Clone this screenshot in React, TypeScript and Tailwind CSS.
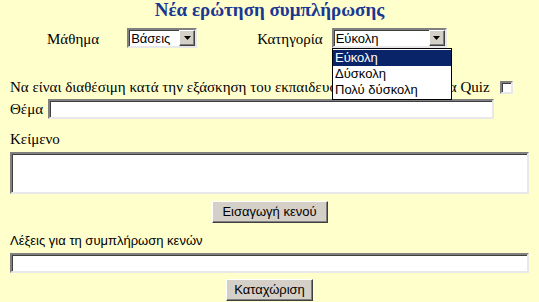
import React from "react";

const serif = "[font-family:'Liberation_Serif','Times_New_Roman',serif]";
const sans = "[font-family:'Liberation_Sans',Arial,sans-serif]";

// classic win9x sunken field
const sunken =
  "border-2 border-t-[#808080] border-l-[#808080] border-b-[#e8e8e8] border-r-[#e8e8e8] shadow-[inset_1px_1px_#404040] bg-white";
const raised =
  "border border-t-white border-l-white border-b-[#404040] border-r-[#404040] shadow-[inset_-1px_-1px_#808080] bg-[#d4d0c8]";

function Arrow() {
  return (
    <span className={`flex h-[16px] w-[16px] shrink-0 items-center justify-center ${raised}`}>
      <svg width="7" height="4" viewBox="0 0 7 4">
        <path d="M0 0h7L3.5 4z" fill="#000" />
      </svg>
    </span>
  );
}

function Select({ value, width }: { value: string; width: number }) {
  return (
    <div className={`flex h-[20px] items-center ${sunken}`} style={{ width }}>
      <span className={`flex-1 pl-[2px] text-[13px] leading-none text-black ${sans}`}>{value}</span>
      <Arrow />
    </div>
  );
}

function Button({ label, width }: { label: string; width: number }) {
  return (
    <button
      type="button"
      className={`flex h-[22px] items-center justify-center text-[13px] text-black ${sans} ${raised}`}
      style={{ width }}
    >
      {label}
    </button>
  );
}

const LEVELS = ["Εύκολη", "Δύσκολη", "Πολύ δύσκολη"];

export default function App() {
  return (
    <div className={`relative h-[302px] w-[539px] overflow-hidden bg-[#ffffcc] px-[10px] text-black ${serif}`}>
      <h1 className="h-[21px] text-center text-[19px] font-bold leading-[19px] text-[#1a3793]">
        Νέα ερώτηση συμπλήρωσης
      </h1>

      <div className="mt-[7px] flex h-[20px] items-end text-[15px] leading-[17px]">
        <span className="ml-[37px]">Μάθημα</span>
        <div className="ml-[28px] self-start">
          <Select value="Βάσεις" width={70} />
        </div>
        <span className="ml-[60px]">Κατηγορία</span>
        <div className="ml-[9px] self-start">
          <Select value="Εύκολη" width={115} />
        </div>
      </div>

      <div className="mt-[31px] flex h-[16px] items-center text-[15px] leading-[16px]">
        <span>
          Να είναι διαθέσιμη κατά την εξάσκηση του εκπαιδ
          <span className="tracking-[0.3px]">ευόμενου μέσα από τ</span>α Quiz
        </span>
        <span className={`ml-[10px] h-[13px] w-[13px] shrink-0 ${sunken}`} />
      </div>

      <div className="mt-[4px] flex h-[20px] items-center text-[15px]">
        <span className="w-[38px]">Θέμα</span>
        <div className={`h-[20px] w-[446px] ${sunken}`} />
      </div>

      <div className="mt-[10px] h-[20px] text-[15px] leading-[20px]">Κείμενο</div>
      <div className={`mt-[3px] h-[42px] w-full ${sunken}`} />

      <div className="mt-[7px] flex justify-center">
        <Button label="Εισαγωγή κενού" width={116} />
      </div>

      <div className={`mt-[10px] h-[16px] text-[13px] leading-[16px] ${sans}`}>Λέξεις για τη συμπλήρωση κενών</div>
      <div className={`mt-[4px] h-[20px] w-full ${sunken}`} />

      <div className="mt-[6px] flex justify-center">
        <Button label="Καταχώριση" width={87} />
      </div>

      {/* open list of the Κατηγορία select */}
      <ul className={`absolute left-[332px] top-[48px] w-[120px] border border-black bg-white py-[1px] text-[13px] ${sans}`}>
        {LEVELS.map((level, i) => (
          <li
            key={level}
            className={`h-[16px] pl-[2px] leading-[16px] ${i === 0 ? "bg-[#0a246a] text-white" : "text-black"}`}
          >
            {level}
          </li>
        ))}
      </ul>
    </div>
  );
}
